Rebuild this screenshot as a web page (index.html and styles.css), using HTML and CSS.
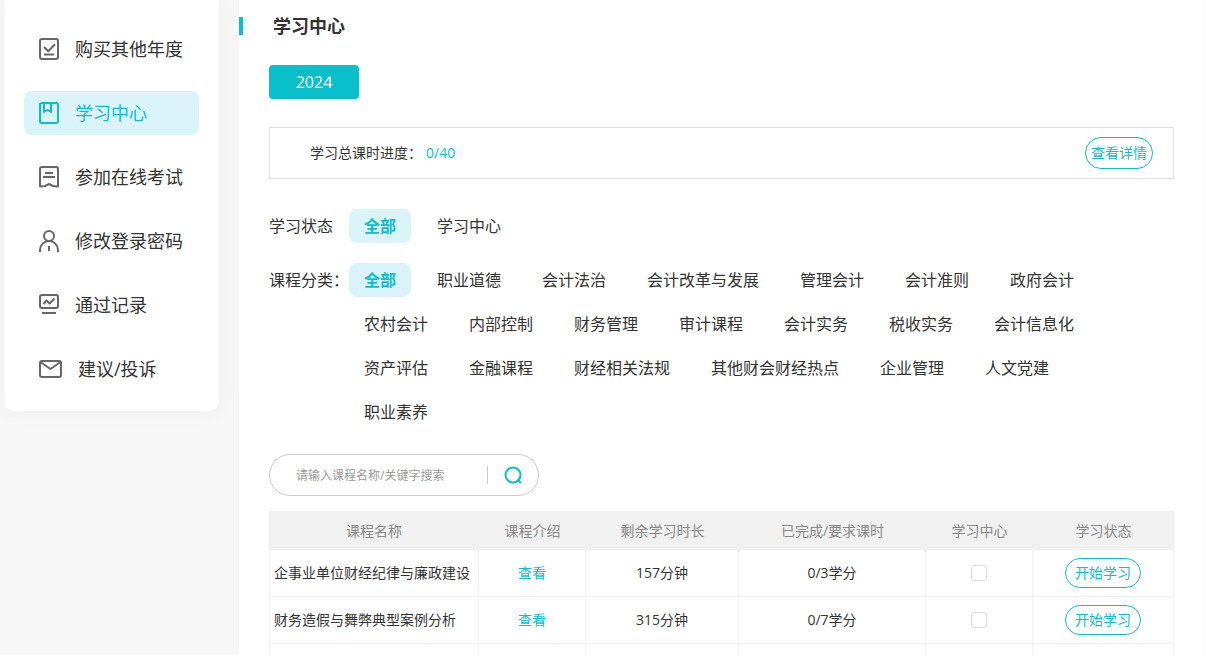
FILE: index.html
```html
<!DOCTYPE html>
<html lang="zh-CN">
<head>
<meta charset="utf-8">
<meta name="viewport" content="width=device-width, initial-scale=1">
<title>学习中心</title>
<link rel="stylesheet" href="styles.css">
</head>
<body>
<div class="app">
  <nav class="sidebar">
    <a class="nav-item" href="#">
      <svg class="icon" width="20" height="22" viewBox="0 0 20 22"><rect x="1" y="1" width="18" height="20" rx="2"/><path d="M5 9l4.300 4.300 6.700-7M5 16.500h10"/></svg>
      <span>购买其他年度</span>
    </a>
    <a class="nav-item nav-active" href="#">
      <svg class="icon" width="20" height="22" viewBox="0 0 20 22"><rect x="1" y="1" width="18" height="20" rx="2"/><path d="M5 1v9l3.500-2 3.500 2V1"/></svg>
      <span>学习中心</span>
    </a>
    <a class="nav-item" href="#">
      <svg class="icon" width="20" height="22" viewBox="0 0 20 22"><path d="M3 1h14a2 2 0 0 1 2 2v17.500L14 20l-4-2-4 2-5 .500V3a2 2 0 0 1 2-2zM6 7h8M4 11h12"/></svg>
      <span>参加在线考试</span>
    </a>
    <a class="nav-item" href="#">
      <svg class="icon" width="20" height="22" viewBox="0 0 20 22"><circle cx="10" cy="6" r="5"/><path d="M1 22v-2a9 9 0 0 1 18 0v2M10 16v5"/></svg>
      <span>修改登录密码</span>
    </a>
    <a class="nav-item" href="#">
      <svg class="icon" width="20" height="22" viewBox="0 0 20 22"><rect x="1" y="1" width="18" height="13" rx="2"/><path d="M4.500 10l3-3.500 3 3 5-5M3 19h14"/></svg>
      <span>通过记录</span>
    </a>
    <a class="nav-item" href="#">
      <svg class="icon" width="23" height="22" viewBox="0 0 23 22"><rect x="1" y="3" width="21" height="16" rx="2"/><path d="M1.500 4l10 7 10-7"/></svg>
      <span>建议/投诉</span>
    </a>
  </nav>

  <main class="main">
    <h1 class="title">学习中心</h1>
    <div class="content">
      <button class="year" type="button">2024</button>

      <section class="progress">
        <p class="progress-text">学习总课时进度：<span class="progress-value">0/40</span></p>
        <button class="detail" type="button">查看详情</button>
      </section>

      <section class="filter">
        <h2 class="filter-label">学习状态</h2>
        <div class="options">
          <button class="option option-on" type="button">全部</button>
          <button class="option" type="button">学习中心</button>
        </div>
      </section>

      <section class="filter">
        <h2 class="filter-label">课程分类：</h2>
        <div class="options">
          <button class="option option-on" type="button">全部</button>
          <button class="option" type="button">职业道德</button>
          <button class="option" type="button">会计法治</button>
          <button class="option" type="button">会计改革与发展</button>
          <button class="option" type="button">管理会计</button>
          <button class="option" type="button">会计准则</button>
          <button class="option" type="button">政府会计</button>
          <button class="option" type="button">农村会计</button>
          <button class="option" type="button">内部控制</button>
          <button class="option" type="button">财务管理</button>
          <button class="option" type="button">审计课程</button>
          <button class="option" type="button">会计实务</button>
          <button class="option" type="button">税收实务</button>
          <button class="option" type="button">会计信息化</button>
          <button class="option" type="button">资产评估</button>
          <button class="option" type="button">金融课程</button>
          <button class="option" type="button">财经相关法规</button>
          <button class="option" type="button">其他财会财经热点</button>
          <button class="option" type="button">企业管理</button>
          <button class="option" type="button">人文党建</button>
          <button class="option" type="button">职业素养</button>
        </div>
      </section>

      <form class="search">
        <input class="search-input" type="text" placeholder="请输入课程名称/关键字搜索" aria-label="请输入课程名称/关键字搜索">
        <button class="search-button" type="button" aria-label="搜索">
          <svg class="search-icon" width="20" height="20" viewBox="0 0 20 20"><circle cx="10" cy="10" r="7.500"/><path d="M14.500 14.500l3.500 3.500"/></svg>
        </button>
      </form>

      <table class="courses">
        <colgroup><col class="col-name"><col class="col-intro"><col class="col-time"><col class="col-credit"><col class="col-check"><col class="col-state"></colgroup>
        <thead>
          <tr><th>课程名称</th><th>课程介绍</th><th>剩余学习时长</th><th>已完成/要求课时</th><th>学习中心</th><th>学习状态</th></tr>
        </thead>
        <tbody>
          <tr>
            <td class="name">企事业单位财经纪律与廉政建设</td>
            <td><a class="view" href="#">查看</a></td>
            <td>157分钟</td>
            <td>0/3学分</td>
            <td><input class="check" type="checkbox" aria-label="企事业单位财经纪律与廉政建设"></td>
            <td><button class="start" type="button">开始学习</button></td>
          </tr>
          <tr>
            <td class="name">财务造假与舞弊典型案例分析</td>
            <td><a class="view" href="#">查看</a></td>
            <td>315分钟</td>
            <td>0/7学分</td>
            <td><input class="check" type="checkbox" aria-label="财务造假与舞弊典型案例分析"></td>
            <td><button class="start" type="button">开始学习</button></td>
          </tr>
          <tr><td></td><td></td><td></td><td></td><td></td><td></td></tr>
        </tbody>
      </table>
    </div>
  </main>
</div>
</body>
</html>
```
FILE: styles.css
```css
* {
  box-sizing: border-box;
}

body {
  margin: 0;
  background: #f7f7f7;
  color: #333;
  font-family: "Open Sans", "Noto Sans CJK SC", sans-serif;
  font-size: 14px;
}

button,
input {
  font-family: inherit;
  color: inherit;
  margin: 0;
  padding: 0;
}

button {
  cursor: pointer;
}

a {
  color: inherit;
  text-decoration: none;
}

.app {
  display: flex;
  align-items: flex-start;
  gap: 20px;
  height: 100vh;
  padding: 0 1px 0 4px;
  overflow: hidden;
}

.sidebar {
  display: flex;
  flex-direction: column;
  flex: none;
  gap: 20px;
  width: 215px;
  padding: 27px 20px 20px;
  background: #fff;
  border-radius: 0 0 10px 10px;
  box-shadow: 0 0 24px rgba(0, 0, 0, 0.04);
}

.nav-item {
  display: flex;
  align-items: center;
  gap: 16px;
  height: 44px;
  padding: 0 15px;
  border-radius: 8px;
  font-size: 18px;
  line-height: 24px;
}

.nav-active {
  background: #dbf4fa;
  color: #08bfcb;
}

.icon {
  flex: none;
  fill: none;
  stroke: #666;
  stroke-width: 2;
  stroke-linejoin: round;
}

.nav-active .icon {
  stroke: #08bfcb;
}

.main {
  flex: 1;
  min-width: 0;
  min-height: 100vh;
  padding-top: 17px;
  background: #fff;
}

.title {
  margin: 0;
  padding-left: 30px;
  border-left: 4px solid #08bfcb;
  font-size: 18px;
  line-height: 18px;
}

.content {
  padding: 30px 30px 0;
}

.year {
  display: block;
  width: 90px;
  height: 34px;
  border: 0;
  border-radius: 4px;
  background: #08bfcb;
  color: #fff;
  font-size: 16px;
}

.progress {
  display: flex;
  align-items: center;
  justify-content: space-between;
  height: 52px;
  margin: 28px 0 30px;
  padding: 0 20px 0 40px;
  border: 1px solid #e0e0e0;
}

.progress-text {
  margin: 0;
  line-height: 20px;
}

.progress-value {
  margin-left: 4px;
  color: #08bfcb;
}

.detail,
.start {
  border: 1px solid #08bfcb;
  border-radius: 16px;
  background: #fff;
  color: #08bfcb;
  font-size: 14px;
  line-height: 20px;
}

.detail {
  width: 68px;
  height: 32px;
}

.filter {
  display: flex;
  align-items: flex-start;
  margin-bottom: 20px;
  padding-right: 40px;
}

.filter-label {
  flex: none;
  width: 80px;
  margin: 0;
  font-size: 16px;
  font-weight: 400;
  line-height: 34px;
  white-space: nowrap;
}

.options {
  display: flex;
  flex-wrap: wrap;
  gap: 10px 11px;
}

.option {
  height: 34px;
  padding: 0 15px;
  border: 0;
  border-radius: 8px;
  background: transparent;
  font-size: 16px;
  line-height: 34px;
}

.option-on {
  background: #dbf4fa;
  color: #08bfcb;
  font-weight: 700;
}

.search {
  display: flex;
  align-items: center;
  width: 270px;
  height: 42px;
  margin: 25px 0 15px;
  border: 1px solid #ccc;
  border-radius: 21px;
}

.search-input {
  flex: 1;
  min-width: 0;
  height: 18px;
  padding-left: 26px;
  border: 0;
  border-right: 1px solid #ccc;
  background: transparent;
  font-size: 12px;
  outline: 0;
}

.search-input::placeholder {
  color: #999;
  opacity: 1;
}

.search-button {
  display: flex;
  align-items: center;
  justify-content: center;
  width: 50px;
  height: 40px;
  border: 0;
  background: transparent;
}

.search-icon {
  fill: none;
  stroke: #08bfcb;
  stroke-width: 2;
}

.courses {
  width: 100%;
  border-collapse: separate;
  border-spacing: 0;
  table-layout: fixed;
}

.col-name {
  width: 210px;
}

.col-intro,
.col-check {
  width: 107px;
}

.col-time {
  width: 153px;
}

.col-credit {
  width: 187px;
}

.col-state {
  width: 141px;
}

.courses th {
  height: 39px;
  padding: 0;
  background: #f1f1f1;
  color: #888;
  font-weight: 400;
  line-height: 20px;
}

.courses td {
  height: 47px;
  padding: 0 4px;
  border: solid #f1f1f1;
  border-width: 0 1px 1px 0;
  line-height: 20px;
  text-align: center;
}

.courses td:first-child {
  border-left-width: 1px;
}

.courses .name {
  text-align: left;
  white-space: nowrap;
}

.view {
  color: #08bfcb;
}

.check {
  display: block;
  width: 16px;
  height: 16px;
  margin: 0 auto;
  border: 1px solid #ddd;
  border-radius: 3px;
  background: #fff;
  appearance: none;
}

.check:checked {
  background: #08bfcb;
}

.start {
  display: block;
  width: 76px;
  height: 30px;
  margin: 0 auto;
}
```
